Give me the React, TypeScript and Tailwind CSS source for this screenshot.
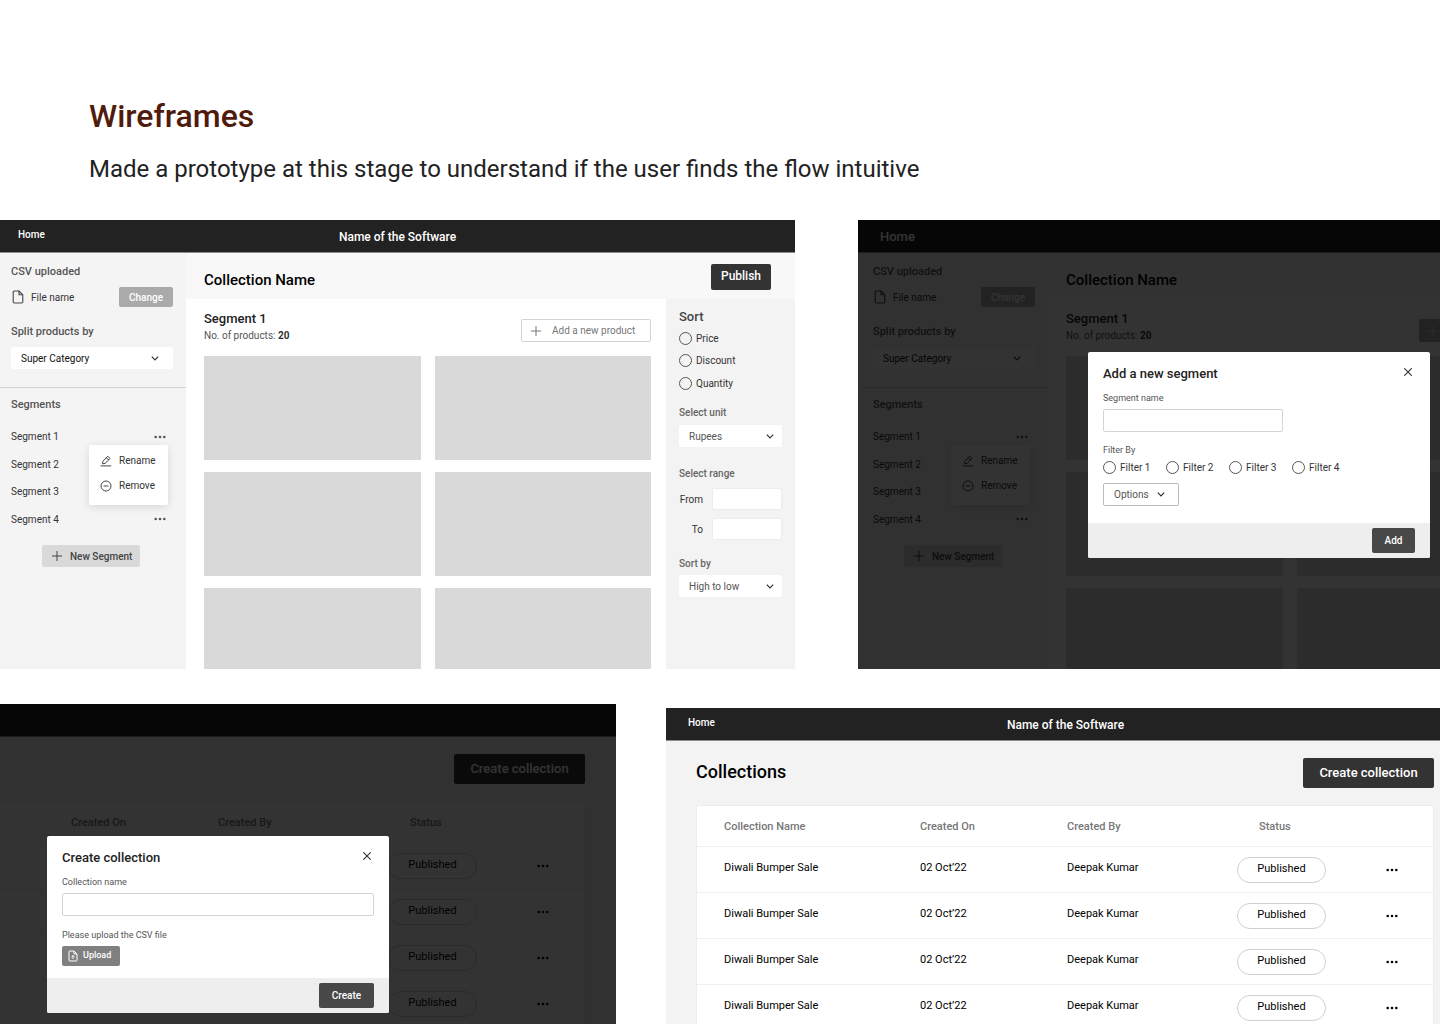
import { useId, type ReactNode } from "react";

function ChevronDown({ className }: { className: string }) {
  return (
    <svg viewBox="0 0 8 5" className={className} fill="none" stroke="currentColor" strokeWidth="1.2" aria-hidden="true">
      <path d="M0.8 0.7 4 3.9 7.2 0.7" />
    </svg>
  );
}

function PlusIcon() {
  return (
    <svg viewBox="0 0 10 10" className="size-[10px] shrink-0" fill="none" stroke="currentColor" strokeWidth="1" aria-hidden="true">
      <path d="M5 0v10M0 5h10" />
    </svg>
  );
}

function CloseIcon() {
  return (
    <svg viewBox="0 0 8 8" className="size-2" fill="none" stroke="currentColor" strokeWidth="1.1" aria-hidden="true">
      <path d="M0.3 0.3 7.7 7.7M7.7 0.3 0.3 7.7" />
    </svg>
  );
}

function DotsIcon() {
  return (
    <svg viewBox="0 0 12 4" className="h-1 w-3" fill="currentColor" aria-hidden="true">
      <circle cx="1.7" cy="2" r="1.3" />
      <circle cx="6" cy="2" r="1.3" />
      <circle cx="10.3" cy="2" r="1.3" />
    </svg>
  );
}

function FileIcon() {
  return (
    <svg viewBox="0 0 12 14" className="h-[14px] w-3 shrink-0" fill="none" stroke="currentColor" strokeWidth="1.1" strokeLinejoin="round" aria-hidden="true">
      <path d="M7 1H2.4Q1.2 1 1.2 2.2v9.6q0 1.2 1.2 1.2h7.2q1.2 0 1.2-1.2V4.8Z" />
      <path d="M7 1v3.8h3.8" />
    </svg>
  );
}

function UploadFileIcon() {
  return (
    <svg viewBox="0 0 10 12" className="h-3 w-[10px] shrink-0" fill="none" stroke="currentColor" strokeWidth="1" strokeLinejoin="round" aria-hidden="true">
      <path d="M6 1H1.8Q1 1 1 1.8v8.4q0 .8.8.8h6.4q.8 0 .8-.8V4Z" />
      <path d="M6 1v3h3" />
      <path d="M5 9V5.6M3.4 7.1 5 5.5l1.6 1.6" />
    </svg>
  );
}

function RenameIcon() {
  return (
    <svg viewBox="0 0 12 12" className="size-3 shrink-0" fill="none" stroke="currentColor" strokeWidth="0.9" strokeLinejoin="round" aria-hidden="true">
      <path d="M0.6 10.9h10.6" />
      <path d="M2.5 8.8 2.9 6.2 7.8 1.2 10.1 3.5 5.1 8.4Z" />
      <path d="M6.3 2.7 8.6 5" />
    </svg>
  );
}

function RemoveIcon() {
  return (
    <svg viewBox="0 0 12 12" className="size-3 shrink-0" fill="none" stroke="currentColor" strokeWidth="0.9" aria-hidden="true">
      <circle cx="6" cy="6" r="5" />
      <path d="M3.6 6h4.8" />
    </svg>
  );
}

function SelectBox({ value, label, className, chevron }: { value: string; label: string; className: string; chevron: string }) {
  return (
    <div className="relative">
      <select aria-label={label} defaultValue={value} className={`block appearance-none rounded-[2px] pl-[10px] text-[10px] ${className}`}>
        <option>{value}</option>
      </select>
      <ChevronDown className={`pointer-events-none absolute top-[9px] h-[5px] w-2 text-[#333] ${chevron}`} />
    </div>
  );
}

function RadioOption({ label, name }: { label: string; name: string }) {
  return (
    <label className="flex items-center gap-1 text-[10px] text-[#333]">
      <input type="radio" name={name} className="size-[13px] appearance-none rounded-full border border-[#555] checked:border-4" />
      {label}
    </label>
  );
}

function TopBar({ title, dimmed, home }: { title?: string; dimmed?: boolean; home: string }) {
  return (
    <header className="relative flex h-[33px] shrink-0 items-center justify-center border-b border-[#8c8c8c] bg-[#222] pt-[2px] text-white">
      <a href="#home" className={`absolute top-0 left-0 flex items-center font-medium ${dimmed ? "h-[33px] text-[13px]" : "h-7 text-[10px]"} ${home}`}>
        Home
      </a>
      {title && <span className="text-[12px] font-medium">{title}</span>}
    </header>
  );
}

function Sidebar({ inset }: { inset?: boolean }) {
  return (
    <aside className={`shrink-0 bg-[#f4f4f4] text-[10px] text-[#333] ${inset ? "w-[190px] pl-1" : "w-[186px]"}`}>
      <div className="border-b border-[#d4d4d4] pt-[11px] pr-[13px] pb-[18px] pl-[11px]">
        <h3 className="text-[11px] leading-4 font-medium text-[#555]">CSV uploaded</h3>
        <div className="mt-[7px] flex h-5 items-center text-[#444]">
          <span className="ml-px flex items-center gap-[7px]">
            <FileIcon />
            <span className="text-[#333]">File name</span>
          </span>
          <button className="ml-auto h-5 w-[54px] rounded-[2px] bg-[#aaa] text-[10px] font-medium text-white">Change</button>
        </div>
        <h3 className="mt-[17px] mb-[7px] text-[11px] leading-4 font-medium text-[#555]">Split products by</h3>
        <SelectBox value="Super Category" label="Split products by" className="h-[22px] w-full bg-white text-[#111]" chevron="right-[14px]" />
      </div>
      <div className="pt-[9px] pr-5 pl-[11px]">
        <h3 className="text-[11px] leading-4 font-medium text-[#555]">Segments</h3>
        <div className="relative">
          <ul className="mt-[10px] grid h-[110px] grid-rows-4">
            {["Segment 1", "Segment 2", "Segment 3", "Segment 4"].map((name) => (
              <li key={name} className="flex items-center justify-between">
                {name}
                <button aria-label={`${name} options`} className="text-[#555]">
                  <DotsIcon />
                </button>
              </li>
            ))}
          </ul>
          <div className="absolute top-[22px] -right-[2px] h-[60px] w-[79px] rounded-[2px] bg-white pt-[3px] pl-[11px] shadow-[0_2px_8px_rgba(0,0,0,0.12)]">
            <button className="flex h-[25px] items-center gap-[7px] text-[#333]">
              <RenameIcon />
              Rename
            </button>
            <button className="flex h-[25px] items-center gap-[7px] text-[#333]">
              <RemoveIcon />
              Remove
            </button>
          </div>
        </div>
        <button className="mt-3 ml-[31px] flex h-[22px] w-[98px] items-center gap-2 rounded-[2px] bg-[#d9d9d9] pl-[10px] font-medium whitespace-nowrap text-[#444]">
          <PlusIcon />
          New Segment
        </button>
      </div>
    </aside>
  );
}

function SortPanel() {
  const id = useId();
  return (
    <aside className="w-[129px] shrink-0 bg-[#f3f3f3] pt-[10px] pr-[13px] pl-[13px] text-[10px]">
      <h3 className="text-[13px] leading-4 font-medium text-[#444]">Sort</h3>
      <div className="mt-[2px] grid h-[68px] grid-rows-3">
        {["Price", "Discount", "Quantity"].map((label) => (
          <RadioOption key={label} label={label} name={`${id}-sort`} />
        ))}
      </div>
      <h4 className="mt-[10px] mb-1 leading-4 font-medium text-[#666]">Select unit</h4>
      <SelectBox value="Rupees" label="Select unit" className="h-[22px] w-full bg-white text-[#555]" chevron="right-2" />
      <h4 className="mt-[19px] mb-[6px] leading-4 font-medium text-[#666]">Select range</h4>
      {["From", "To"].map((label) => (
        <label key={label} className="mb-2 flex h-[22px] items-center text-[#333]">
          <span className="w-6 text-right">{label}</span>
          <input type="text" className="ml-[9px] h-[22px] w-[70px] rounded-[2px] border border-[#ececec] bg-white px-2" />
        </label>
      ))}
      <h4 className="mt-4 mb-[3px] leading-4 font-medium text-[#666]">Sort by</h4>
      <SelectBox value="High to low" label="Sort by" className="h-[22px] w-full bg-white text-[#555]" chevron="right-2" />
    </aside>
  );
}

function CollectionEditor({ dimmed }: { dimmed?: boolean }) {
  return (
    <>
      <TopBar title={dimmed ? undefined : "Name of the Software"} dimmed={dimmed} home={dimmed ? "pl-[22px]" : "pl-[18px]"} />
      <div className="flex min-h-0 flex-1">
        <Sidebar inset={dimmed} />
        <div className="flex min-w-0 flex-1 flex-col">
          <div className="flex h-[46px] shrink-0 items-center justify-between bg-[#f8f8f8] pt-[2px] pr-6 pl-[18px]">
            <h2 className="pt-[6px] text-[15px] font-medium text-black">Collection Name</h2>
            <button className="h-[26px] w-[60px] rounded-[2px] bg-[#333] pb-[2px] text-[12px] font-medium text-white">Publish</button>
          </div>
          <div className="flex min-h-0 flex-1 bg-white">
            <section className="min-w-0 flex-1 pr-[15px] pl-[18px]">
              <div className="flex h-[57px] items-start justify-between pt-3">
                <div>
                  <h3 className="text-[13px] leading-4 font-medium text-[#222]">Segment 1</h3>
                  <p className="text-[10px] leading-[18px] text-[#555]">
                    No. of products: <b className="font-bold text-[#333]">20</b>
                  </p>
                </div>
                {dimmed ? (
                  <button className="mt-2 flex h-[23px] w-[94px] items-center gap-4 rounded-[2px] bg-[#aaa] pl-[9px] text-[10px] text-[#ddd]">
                    <PlusIcon />
                    Add
                  </button>
                ) : (
                  <button className="mt-2 flex h-[23px] w-[130px] items-center gap-[11px] rounded-[2px] border border-[#d4d4d4] pl-[9px] text-[10px] whitespace-nowrap text-[#777]">
                    <PlusIcon />
                    Add a new product
                  </button>
                )}
              </div>
              <div className="grid auto-rows-[104px] grid-cols-2 gap-x-[14px] gap-y-3">
                {[1, 2, 3, 4, 5, 6].map((n) => (
                  <div key={n} className="bg-[#d9d9d9]" />
                ))}
              </div>
            </section>
            <SortPanel />
          </div>
        </div>
      </div>
    </>
  );
}

function CollectionsDashboard({ dimmed }: { dimmed?: boolean }) {
  return (
    <>
      <TopBar title={dimmed ? undefined : "Name of the Software"} home="pl-[22px]" />
      <div className="min-h-0 flex-1 bg-[#f3f3f3] pr-[31px] pl-[30px]">
        <div className="flex h-16 items-center justify-between">
          <h2 className="pb-[3px] text-[18px] font-medium text-black">{dimmed ? "" : "Collections"}</h2>
          <button className="h-[30px] w-[131px] rounded-[2px] bg-[#333] text-[13px] font-medium text-white">Create collection</button>
        </div>
        <table className="w-full table-fixed border-separate border-spacing-0 border border-[#ededed] bg-white text-left text-[11px] text-black">
          <colgroup>
            <col />
            <col className="w-[147px]" />
            <col className="w-[170px]" />
            <col className="w-[149px]" />
            <col className="w-[47px]" />
          </colgroup>
          <thead>
            <tr className="h-[41px] text-[#777] *:border-b *:border-[#f0f0f0] *:pt-[2px] *:font-medium">
              <th className="pl-[27px]">Collection Name</th>
              <th>Created On</th>
              <th>Created By</th>
              <th className="pl-[22px]">Status</th>
              <th aria-label="Options" />
            </tr>
          </thead>
          <tbody>
            {[1, 2, 3, 4, 5].map((row) => (
              <tr key={row} className="h-[46px] *:border-b *:border-[#f0f0f0]">
                <td className="pb-[2px] pl-[27px]">Diwali Bumper Sale</td>
                <td className="pb-[2px]">02 Oct’22</td>
                <td className="pb-[2px]">Deepak Kumar</td>
                <td>
                  <span className="flex h-[26px] w-[89px] items-center justify-center rounded-full border border-[#d0d0d0]">Published</span>
                </td>
                <td>
                  <button aria-label="Collection options" className="block">
                    <DotsIcon />
                  </button>
                </td>
              </tr>
            ))}
          </tbody>
        </table>
      </div>
    </>
  );
}

function Modal({ title, action, className, children }: { title: string; action: string; className: string; children: ReactNode }) {
  return (
    <div role="dialog" aria-label={title} className={`absolute top-[132px] w-[342px] overflow-hidden rounded-[2px] bg-white ${className}`}>
      <div className="px-[15px] pt-[13px]">
        <div className="flex items-start justify-between">
          <h3 className="text-[13px] leading-[18px] font-medium text-[#222]">{title}</h3>
          <button aria-label="Close" className="mt-[3px] mr-[3px] text-[#333]">
            <CloseIcon />
          </button>
        </div>
        {children}
      </div>
      <footer className="flex h-[35px] items-center justify-end bg-[#eee] pr-[15px]">
        <button className={`h-[25px] rounded-[2px] bg-[#484848] text-[10px] font-medium text-white ${action === "Add" ? "w-[43px]" : "w-[55px]"}`}>{action}</button>
      </footer>
    </div>
  );
}

function AddSegmentModal() {
  const id = useId();
  return (
    <Modal title="Add a new segment" action="Add" className="left-[230px]">
      <label htmlFor={`${id}-name`} className="mt-2 block text-[9px] leading-[14px] text-[#555]">
        Segment name
      </label>
      <input id={`${id}-name`} type="text" className="mt-1 block h-[23px] w-[180px] rounded-[2px] border border-[#d4d4d4] px-2 text-[10px]" />
      <p className="mt-[11px] text-[9px] leading-[14px] text-[#555]">Filter By</p>
      <div className="mt-px grid h-[18px] w-[252px] grid-cols-4">
        {["Filter 1", "Filter 2", "Filter 3", "Filter 4"].map((label) => (
          <RadioOption key={label} label={label} name={`${id}-filter`} />
        ))}
      </div>
      <div className="mt-[7px] mb-[17px] w-[76px]">
        <SelectBox value="Options" label="Options" className="h-[23px] w-full border border-[#bbb] text-[#555]" chevron="right-[14px]" />
      </div>
    </Modal>
  );
}

function CreateCollectionModal() {
  const id = useId();
  return (
    <Modal title="Create collection" action="Create" className="left-[47px]">
      <label htmlFor={`${id}-name`} className="mt-2 block text-[9px] leading-[14px] text-[#555]">
        Collection name
      </label>
      <input id={`${id}-name`} type="text" className="mt-1 block h-[23px] w-full rounded-[2px] border border-[#d4d4d4] px-2 text-[10px]" />
      <p className="mt-3 text-[9px] leading-[14px] text-[#555]">Please upload the CSV file</p>
      <button className="mt-1 mb-3 flex h-5 w-[58px] items-center gap-[5px] rounded-[2px] bg-[#808080] pl-[6px] text-[9px] font-medium text-white">
        <UploadFileIcon />
        Upload
      </button>
    </Modal>
  );
}

function Scrim() {
  return <div className="absolute inset-0 bg-black/80" />;
}

export default function App() {
  return (
    <main className="flex h-screen flex-col overflow-hidden bg-white font-[Roboto,sans-serif]">
      <div className="h-[220px] shrink-0 pt-[92px] pl-[89px]">
        <h1 className="text-[32px] leading-[48px] font-medium text-[#4f1b0c]">Wireframes</h1>
        <p className="mt-[13px] text-[24px] leading-8 text-[#222]">Made a prototype at this stage to understand if the user finds the flow intuitive</p>
      </div>

      <div className="grid h-[449px] shrink-0 grid-cols-[minmax(0,795fr)_minmax(0,582fr)] gap-[63px]">
        <section className="flex min-h-0 flex-col overflow-hidden">
          <CollectionEditor />
        </section>
        <section className="relative min-h-0 overflow-hidden">
          <div className="flex h-full w-[calc(100%+217px)] flex-col">
            <CollectionEditor dimmed />
          </div>
          <Scrim />
          <AddSegmentModal />
        </section>
      </div>

      <div className="mt-[35px] grid min-h-0 flex-1 grid-cols-[minmax(0,616fr)_minmax(0,774fr)] gap-[50px]">
        <section className="relative flex min-h-0 justify-end overflow-hidden">
          <div className="flex h-full w-[calc(100%+183px)] shrink-0 flex-col">
            <CollectionsDashboard dimmed />
          </div>
          <Scrim />
          <CreateCollectionModal />
        </section>
        <section className="mt-1 min-h-0 overflow-hidden">
          <div className="flex h-full w-[calc(100%+25px)] flex-col">
            <CollectionsDashboard />
          </div>
        </section>
      </div>
    </main>
  );
}
